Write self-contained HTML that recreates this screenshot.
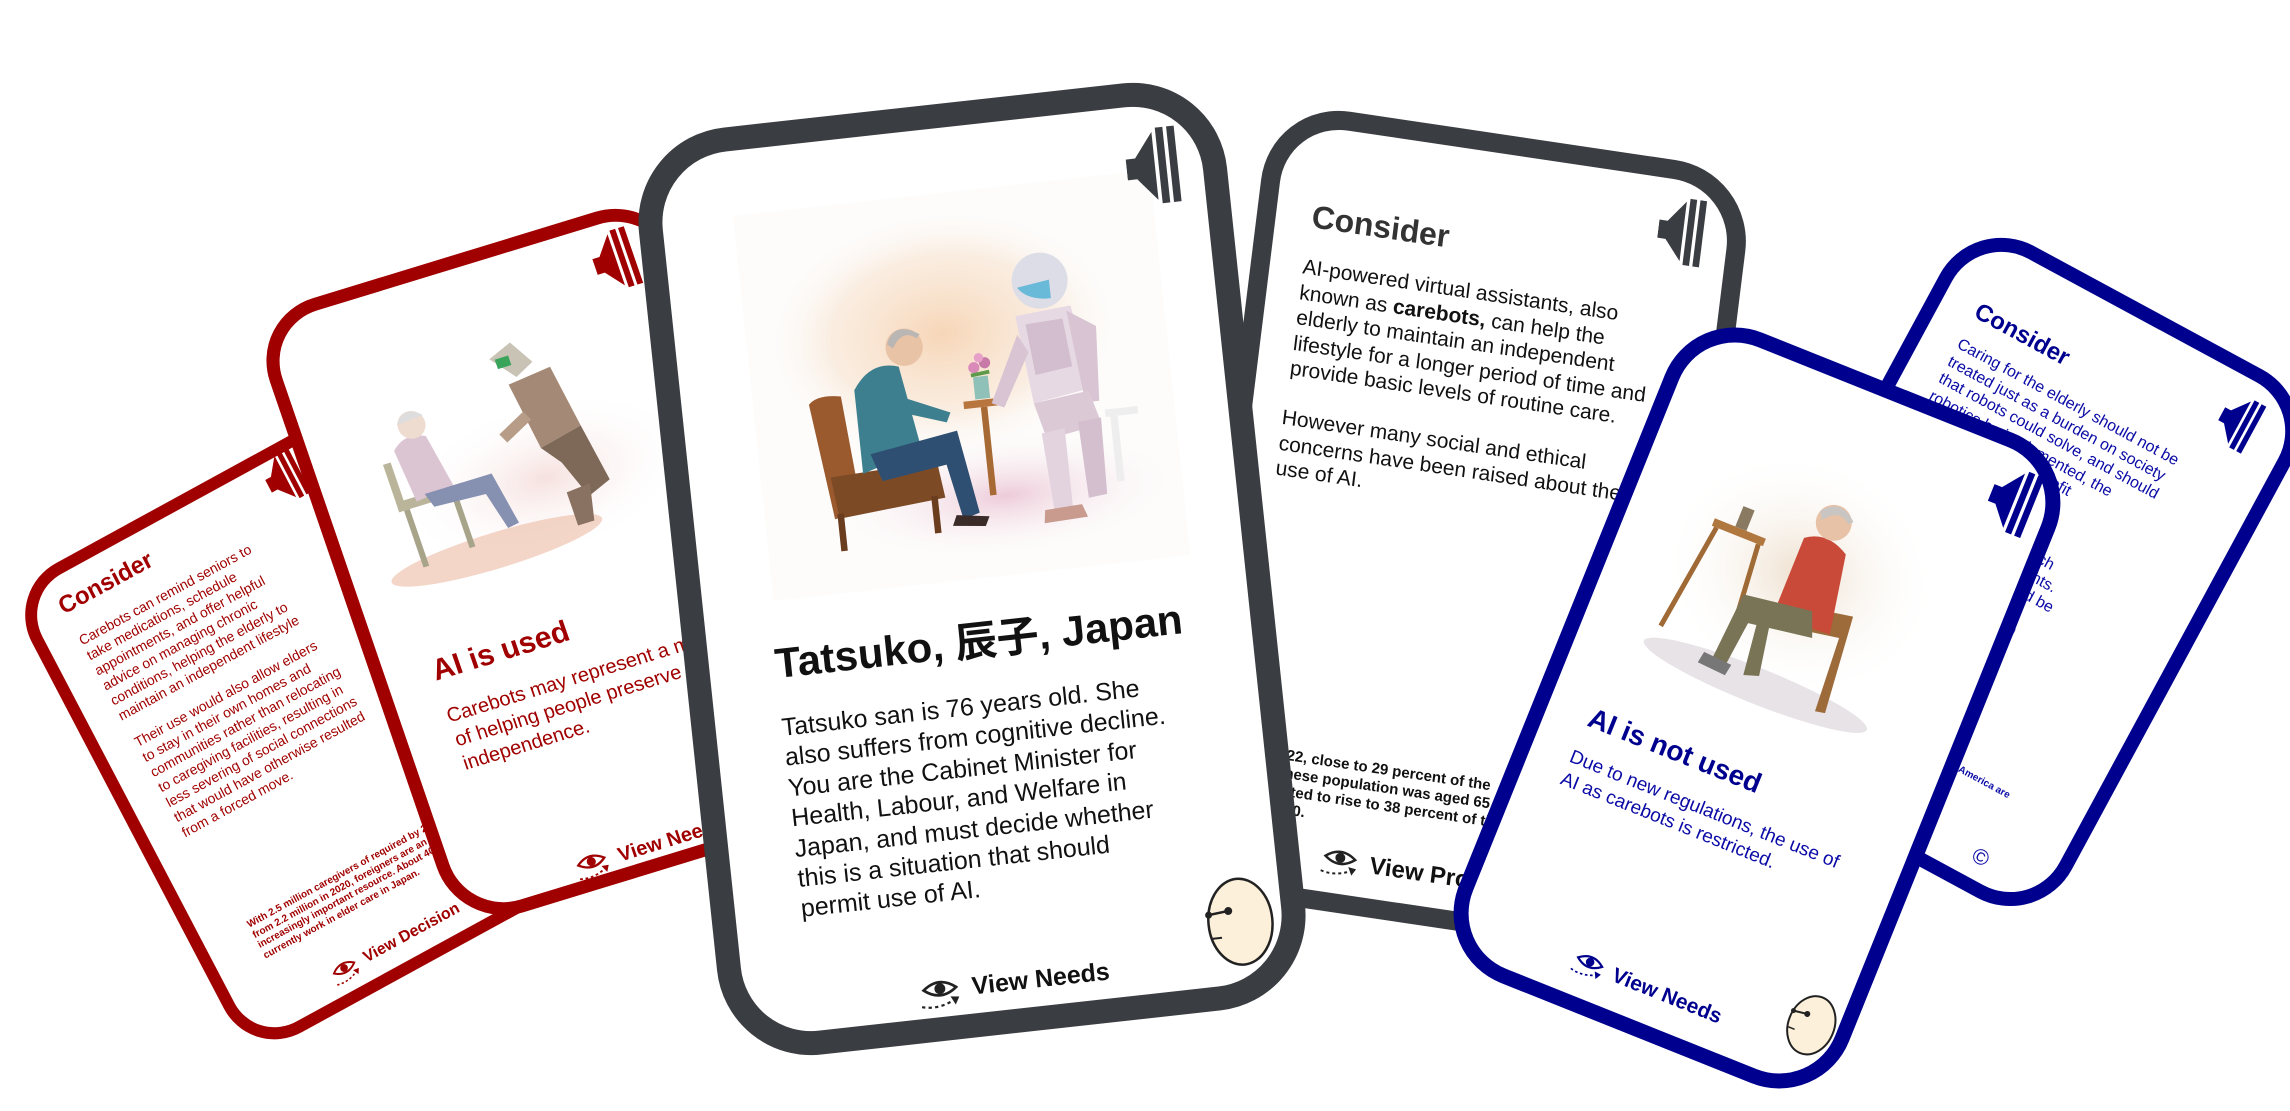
<!DOCTYPE html>
<html><head><meta charset="utf-8">
<style>
html,body{margin:0;padding:0;background:#fff;}
body{width:2290px;height:1100px;position:relative;overflow:hidden;font-family:"Liberation Sans","Noto Sans CJK JP",Arial,sans-serif;}
.card{position:absolute;left:0;top:0;transform-origin:0 0;}
.frame{position:absolute;left:0;top:0;right:0;bottom:0;background:#fff;box-sizing:border-box;border-style:solid;}
.t{position:absolute;white-space:nowrap;}
.ab{position:absolute;}
</style></head><body>

<!-- Card 1: red Consider -->
<div class="card" style="width:388px;height:530px;transform:matrix(.876,-.479,.464,.885,5,591);color:#a00000;z-index:1">
 <div class="frame" style="border-width:12px;border-color:#a00000;border-radius:58px"></div>
 <svg class="ab" style="left:282px;top:8px" width="40" height="52" viewBox="0 0 60 80"><path d="M0 30H10L30 4V76L10 52H0Z" fill="#a00000"/><rect x="34" y="0" width="8" height="80" fill="#a00000"/><rect x="46" y="0" width="8" height="80" fill="#a00000"/></svg>
 <div class="t" style="left:41px;top:28px;font-size:24px;line-height:28px;font-weight:bold">Consider</div>
 <div class="t" style="left:43px;top:72px;font-size:14px;line-height:17px">Carebots can remind seniors to<br>take medications, schedule<br>appointments, and offer helpful<br>advice on managing chronic<br>conditions, helping the elderly to<br>maintain an independent lifestyle</div>
 <div class="t" style="left:45px;top:188px;font-size:14px;line-height:17px">Their use would also allow elders<br>to stay in their own homes and<br>communities rather than relocating<br>to caregiving facilities, resulting in<br>less severing of social connections<br>that would have otherwise resulted<br>from a forced move.</div>
 <div class="t" style="left:60px;top:405px;font-size:10px;line-height:11.5px;font-weight:bold">With 2.5 million caregivers of required by 2025, up<br>from 2.2 million in 2020, foreigners are an<br>increasingly important resource. About 40,000<br>currently work in elder care in Japan.</div>
 <svg class="ab" style="left:110px;top:484px" width="34" height="26" viewBox="0 0 44 32"><path d="M5 12Q20 0 35 12Q20 24 5 12Z" fill="none" stroke="#a00000" stroke-width="2.5"/><circle cx="20" cy="12" r="5" fill="#a00000"/><path d="M2 27Q16 31 31 24" fill="none" stroke="#a00000" stroke-width="2" stroke-dasharray="3 3"/><path d="M29 20L37 21L33 28Z" fill="#a00000"/></svg>
 <div class="t" style="left:148px;top:486px;font-size:16px;line-height:20px;font-weight:bold">View Decision</div>
</div>

<!-- Card 2: red AI is used -->
<div class="card" style="width:431px;height:649px;transform:matrix(.956,-.2923,.325,.946,248,318);color:#a00000;z-index:2">
 <div class="frame" style="border-width:13px;border-color:#a00000;border-radius:68px"></div>
 <svg class="ab" style="left:345px;top:22px" width="45" height="60" viewBox="0 0 60 80"><path d="M0 30H10L30 4V76L10 52H0Z" fill="#a00000"/><rect x="34" y="0" width="8" height="80" fill="#a00000"/><rect x="46" y="0" width="8" height="80" fill="#a00000"/></svg>
 <svg class="ab" style="left:40px;top:70px" width="320" height="250" viewBox="0 0 320 250">
  <defs><radialGradient id="g2" cx=".5" cy=".5" r=".5"><stop offset="0" stop-color="#f3d9d6" stop-opacity=".8"/><stop offset="1" stop-color="#fff" stop-opacity="0"/></radialGradient></defs>
  <ellipse cx="190" cy="170" rx="150" ry="80" fill="url(#g2)"/>
  <ellipse cx="120" cy="225" rx="110" ry="18" fill="#e9b59a" opacity=".55"/>
  <rect x="40" y="150" width="70" height="10" fill="#b9b49a"/><rect x="45" y="160" width="6" height="60" fill="#a7a48a"/><rect x="95" y="160" width="6" height="55" fill="#a7a48a"/><rect x="40" y="110" width="8" height="50" fill="#b9b49a"/>
  <path d="M55 100Q70 85 90 95L100 150L60 155Z" fill="#dcc5d2"/>
  <circle cx="80" cy="80" r="14" fill="#efdcd0"/><path d="M66 76Q78 58 94 74" fill="#ddd" />
  <path d="M70 150L140 150L150 205L138 207L128 168L75 165Z" fill="#8690b0"/>
  <path d="M175 40L200 30L215 55L195 65Z" fill="#c9c3b6"/><rect x="180" y="42" width="14" height="10" fill="#3aa55a"/>
  <path d="M185 70L230 65L240 130L195 140Z" fill="#a48a76"/><path d="M195 140L240 130L250 190L225 200L210 160Z" fill="#7e6858"/>
  <path d="M205 190L230 188L222 225L205 225Z" fill="#8a7262"/><path d="M160 115L190 100L195 110L165 125Z" fill="#b79c88"/>
 </svg>
 <div class="t" style="left:60px;top:375px;font-size:30px;line-height:36px;font-weight:bold">AI is used</div>
 <div class="t" style="left:59px;top:428px;font-size:20px;line-height:25px">Carebots may represent a means<br>of helping people preserve their<br>independence.</div>
 <svg class="ab" style="left:130px;top:609px" width="40" height="30" viewBox="0 0 44 32"><path d="M5 12Q20 0 35 12Q20 24 5 12Z" fill="none" stroke="#a00000" stroke-width="2.5"/><circle cx="20" cy="12" r="5" fill="#a00000"/><path d="M2 27Q16 31 31 24" fill="none" stroke="#a00000" stroke-width="2" stroke-dasharray="3 3"/><path d="M29 20L37 21L33 28Z" fill="#a00000"/></svg>
 <div class="t" style="left:176px;top:611px;font-size:20px;line-height:24px;font-weight:bold">View Needs</div>
</div>

<!-- Card 4: grey Consider -->
<div class="card" style="width:489px;height:795px;transform:matrix(.990,.147,-.123,.992,1271,100);color:#111;z-index:3">
 <div class="frame" style="border-width:19px;border-color:#3a3d41;border-radius:80px"></div>
 <svg class="ab" style="left:400px;top:36px" width="50" height="67" viewBox="0 0 60 80"><path d="M0 30H10L30 4V76L10 52H0Z" fill="#3a3d41"/><rect x="34" y="0" width="8" height="80" fill="#3a3d41"/><rect x="46" y="0" width="8" height="80" fill="#3a3d41"/></svg>
 <div class="t" style="left:55px;top:90px;font-size:32px;line-height:38px;font-weight:bold;color:#333">Consider</div>
 <div class="t" style="left:52px;top:148px;font-size:21px;line-height:25.5px">AI-powered virtual assistants, also<br>known as <b>carebots,</b> can help the<br>elderly to maintain an independent<br>lifestyle for a longer period of time and<br>provide basic levels of routine care.</div>
 <div class="t" style="left:50px;top:300px;font-size:21px;line-height:25.5px">However many social and ethical<br>concerns have been raised about the<br>use of AI.</div>
 <div class="t" style="left:62px;top:638px;font-size:15px;line-height:18px;font-weight:bold">In 2022, close to 29 percent of the<br>Japanese population was aged 65 years and over,<br>expected to rise to 38 percent of the population<br>by 2060.</div>
 <svg class="ab" style="left:142px;top:728px" width="44" height="32" viewBox="0 0 44 32"><path d="M5 12Q20 0 35 12Q20 24 5 12Z" fill="none" stroke="#222" stroke-width="2.5"/><circle cx="20" cy="12" r="5" fill="#222"/><path d="M2 27Q16 31 31 24" fill="none" stroke="#222" stroke-width="2" stroke-dasharray="3 3"/><path d="M29 20L37 21L33 28Z" fill="#222"/></svg>
 <div class="t" style="left:192px;top:729px;font-size:24px;line-height:30px;font-weight:bold">View Problem</div>
</div>

<!-- Card 6: blue Consider right -->
<div class="card" style="width:399px;height:600px;transform:matrix(.880,.476,-.476,.880,1973,213);color:#0a0aa6;z-index:4">
 <div class="frame" style="border-width:14px;border-color:#00008f;border-radius:70px"></div>
 <svg class="ab" style="left:314px;top:30px" width="40" height="55" viewBox="0 0 60 80"><path d="M0 30H10L30 4V76L10 52H0Z" fill="#00008f"/><rect x="34" y="0" width="8" height="80" fill="#00008f"/><rect x="46" y="0" width="8" height="80" fill="#00008f"/></svg>
 <div class="t" style="left:49px;top:70px;font-size:24px;line-height:28px;font-weight:bold;color:#00008f">Consider</div>
 <div class="t" style="left:49px;top:112px;font-size:16px;line-height:19.5px">Caring for the elderly should not be<br>treated just as a burden on society<br>that robots could solve, and should<br>robotics be implemented, the<br>technology must benefit</div>
 <div class="t" style="left:49px;top:225px;font-size:16px;line-height:19px">everyone.<br>In the US, carebots will<br>not replace workers, which<br>relies heavily on immigrants.<br>Instead, caregivers should be<br>paid for the work they do<br>as family members and an</div>
 <div class="t" style="left:150px;top:490px;font-size:10px;line-height:12px;font-weight:bold">Most care workers in America are<br>Department of Labor</div>
 <div class="t" style="left:305px;top:550px;font-size:22px;line-height:26px">©</div>
</div>

<!-- Center card -->
<div class="card" style="width:592px;height:932px;transform:matrix(.9932,-.1098,.1052,.9946,629,138);color:#111;z-index:5">
 <div class="frame" style="border-width:24px;border-color:#3a3d41;border-radius:95px"></div>
 <svg class="ab" style="left:95px;top:85px" width="420" height="395" viewBox="0 0 450 415">
  <defs>
   <radialGradient id="gc" cx=".5" cy=".5" r=".5"><stop offset="0" stop-color="#f6d2b0" stop-opacity=".9"/><stop offset=".6" stop-color="#f8e3cf" stop-opacity=".6"/><stop offset="1" stop-color="#fff" stop-opacity="0"/></radialGradient>
   <radialGradient id="gp" cx=".5" cy=".5" r=".5"><stop offset="0" stop-color="#e9bfd0" stop-opacity=".8"/><stop offset="1" stop-color="#fff" stop-opacity="0"/></radialGradient>
  </defs>
  <rect width="450" height="415" fill="#fdfcfb"/>
  <ellipse cx="210" cy="150" rx="200" ry="140" fill="url(#gc)"/>
  <ellipse cx="260" cy="330" rx="200" ry="70" fill="url(#gp)"/>
  <path d="M60 210Q70 200 95 205L105 330L75 335Z" fill="#9a5a2e"/>
  <path d="M75 290L190 285L195 325L80 335Z" fill="#7d4a26"/>
  <rect x="78" y="330" width="7" height="40" fill="#6b3d1f"/><rect x="180" y="322" width="7" height="40" fill="#6b3d1f"/>
  <path d="M110 200Q130 170 160 180L175 270L110 290Z" fill="#3d7f8f"/>
  <circle cx="168" cy="160" r="20" fill="#e9c3a6"/><path d="M150 155Q160 130 186 148L182 152Q168 140 156 160Z" fill="#b9b6b4"/>
  <path d="M120 270L215 255L230 345L212 350L200 290L130 300Z" fill="#2f4f72"/>
  <path d="M205 345L240 350L235 360L200 356Z" fill="#3a2a28"/>
  <path d="M165 215L210 235L205 245L160 230Z" fill="#3d7f8f"/>
  <rect x="225" y="225" width="45" height="8" fill="#b8763e"/><rect x="243" y="233" width="7" height="95" fill="#a86a34"/>
  <rect x="238" y="200" width="16" height="24" fill="#8fc1b8"/>
  <circle cx="240" cy="190" r="6" fill="#d98ab8"/><circle cx="252" cy="186" r="6" fill="#c77aa8"/><circle cx="246" cy="180" r="5" fill="#e7a0c8"/>
  <path d="M236 198L256 196" stroke="#5f9a4a" stroke-width="4"/>
  <circle cx="320" cy="105" r="30" fill="#dcdde6"/><path d="M295 110Q305 125 330 125L330 105Z" fill="#69b9d8"/>
  <path d="M290 140L350 135L365 225L300 235Z" fill="#e6d9e4"/><path d="M300 150L340 148L345 200L305 205Z" fill="#c9b2c4" opacity=".7"/>
  <path d="M345 140L375 160L370 240L355 240Z" fill="#d8c4d2"/>
  <path d="M290 160L255 230L268 236L300 180Z" fill="#d8c4d2"/>
  <path d="M300 235L360 228L370 265L310 275Z" fill="#dcc9d6"/>
  <path d="M305 268L330 265L330 350L310 352Z" fill="#e2d3de"/><path d="M345 260L370 258L368 340L348 342Z" fill="#d4bfce"/>
  <path d="M300 350L340 348L345 362L298 364Z" fill="#c99a8e"/>
  <rect x="375" y="250" width="35" height="8" fill="#eee"/><rect x="380" y="258" width="8" height="70" fill="#eee"/>
 </svg>
 <svg class="ab" style="left:492px;top:44px" width="57" height="83" viewBox="0 0 60 80"><path d="M0 30H10L30 4V76L10 52H0Z" fill="#3a3d41"/><rect x="34" y="0" width="8" height="80" fill="#3a3d41"/><rect x="46" y="0" width="8" height="80" fill="#3a3d41"/></svg>
 <div class="t" style="left:90px;top:514px;font-size:42px;line-height:50px;font-weight:bold">Tatsuko, 辰子, Japan</div>
 <div class="t" style="left:90px;top:588px;font-size:25px;line-height:30.4px">Tatsuko san is 76 years old. She<br>also suffers from cognitive decline.<br>You are the Cabinet Minister for<br>Health, Labour, and Welfare in<br>Japan, and must decide whether<br>this is a situation that should<br>permit use of AI.</div>
 <svg class="ab" style="left:198px;top:866px" width="48" height="36" viewBox="0 0 44 32"><path d="M5 12Q20 0 35 12Q20 24 5 12Z" fill="none" stroke="#222" stroke-width="2.5"/><circle cx="20" cy="12" r="5" fill="#222"/><path d="M2 27Q16 31 31 24" fill="none" stroke="#222" stroke-width="2" stroke-dasharray="3 3"/><path d="M29 20L37 21L33 28Z" fill="#222"/></svg>
 <div class="t" style="left:252px;top:866px;font-size:25px;line-height:30px;font-weight:bold">View Needs</div>
 <svg class="ab" style="left:488px;top:800px" width="72" height="92" viewBox="0 0 72 92"><ellipse cx="38" cy="46" rx="32" ry="43" fill="#fdf0da" stroke="#222" stroke-width="2.5"/><line x1="7" y1="36" x2="27" y2="34" stroke="#222" stroke-width="2.5"/><circle cx="7" cy="36" r="3.5" fill="#222"/><circle cx="27" cy="34" r="4" fill="#222"/><line x1="8" y1="60" x2="18" y2="60" stroke="#222" stroke-width="2"/></svg>
</div>

<!-- Card 5: blue AI is not used -->
<div class="card" style="width:420px;height:701px;transform:matrix(.9286,.3714,-.3738,.9272,1693,305);color:#0a0aa6;z-index:6">
 <div class="frame" style="border-width:15px;border-color:#00008f;border-radius:75px"></div>
 <svg class="ab" style="left:60px;top:80px" width="280" height="280" viewBox="0 0 280 280">
  <defs><radialGradient id="g5" cx=".5" cy=".5" r=".5"><stop offset="0" stop-color="#ead8c2" stop-opacity=".8"/><stop offset="1" stop-color="#fff" stop-opacity="0"/></radialGradient></defs>
  <ellipse cx="140" cy="130" rx="140" ry="120" fill="url(#g5)"/>
  <ellipse cx="140" cy="250" rx="120" ry="18" fill="#cfc8cf" opacity=".5"/>
  <rect x="40" y="110" width="55" height="8" fill="#b0773f"/><path d="M45 118L30 230M90 118L100 225" stroke="#a06a36" stroke-width="5"/>
  <rect x="62" y="88" width="12" height="22" fill="#8a7a62"/>
  <path d="M150 160L205 150L215 250L205 252L200 175L160 182Z" fill="#9d6a3a"/>
  <path d="M130 95Q150 80 175 95L190 175L130 180Z" fill="#c94a38"/>
  <circle cx="152" cy="70" r="18" fill="#e8c2a6"/><path d="M135 64Q150 44 170 62L166 66Q152 54 140 72Z" fill="#c9c5c2"/>
  <path d="M95 170L165 160L175 185L110 195L105 240L90 240Z" fill="#7a7456"/>
  <path d="M80 238L110 240L108 252L78 250Z" fill="#777"/><path d="M130 185L140 240L125 245L118 190Z" fill="#7a7456"/>
 </svg>
 <svg class="ab" style="left:346px;top:30px" width="50" height="65" viewBox="0 0 60 80"><path d="M0 30H10L30 4V76L10 52H0Z" fill="#00008f"/><rect x="34" y="0" width="8" height="80" fill="#00008f"/><rect x="46" y="0" width="8" height="80" fill="#00008f"/></svg>
 <div class="t" style="left:58px;top:404px;font-size:28px;line-height:34px;font-weight:bold;color:#00008f">AI is not used</div>
 <div class="t" style="left:55px;top:453px;font-size:19px;line-height:24px">Due to new regulations, the use of<br>AI as carebots is restricted.</div>
 <svg class="ab" style="left:133px;top:638px" width="38" height="28" viewBox="0 0 44 32"><path d="M5 12Q20 0 35 12Q20 24 5 12Z" fill="none" stroke="#00008f" stroke-width="2.5"/><circle cx="20" cy="12" r="5" fill="#00008f"/><path d="M2 27Q16 31 31 24" fill="none" stroke="#00008f" stroke-width="2" stroke-dasharray="3 3"/><path d="M29 20L37 21L33 28Z" fill="#00008f"/></svg>
 <div class="t" style="left:176px;top:639px;font-size:21px;line-height:26px;font-weight:bold;color:#00008f">View Needs</div>
 <svg class="ab" style="left:352px;top:592px" width="52" height="66" viewBox="0 0 52 66"><ellipse cx="27" cy="33" rx="23" ry="30" fill="#fdf0da" stroke="#222" stroke-width="2"/><line x1="5" y1="26" x2="19" y2="24" stroke="#222" stroke-width="2"/><circle cx="5" cy="26" r="2.5" fill="#222"/><circle cx="19" cy="24" r="3" fill="#222"/><line x1="6" y1="43" x2="13" y2="43" stroke="#222" stroke-width="1.5"/></svg>
</div>

</body></html>
